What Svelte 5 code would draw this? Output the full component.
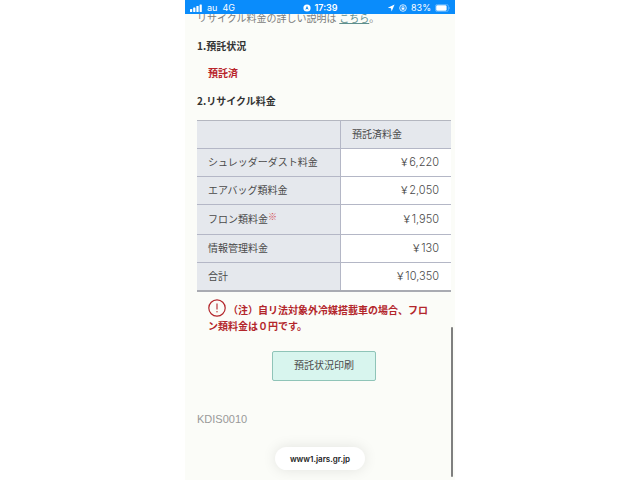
<script lang="ts">
	type Fee = { label: string; amount: number; noted?: boolean };

	const fees: Fee[] = [
		{ label: 'シュレッダーダスト料金', amount: 6220 },
		{ label: 'エアバッグ類料金', amount: 2050 },
		{ label: 'フロン類料金', amount: 1950, noted: true },
		{ label: '情報管理料金', amount: 130 },
	];

	const total = fees.reduce((sum, fee) => sum + fee.amount, 0);

	function formatYen(n: number): string {
		return n.toLocaleString('en-US');
	}
</script>

<div class="phone">
	<header class="status-bar">
		<div class="status-left">
			<svg class="signal" viewBox="0 0 12 8" aria-hidden="true">
				<rect x="0" y="5" width="2.2" height="3" rx="0.5" />
				<rect x="3.2" y="3.6" width="2.2" height="4.4" rx="0.5" />
				<rect x="6.4" y="2" width="2.2" height="6" rx="0.5" />
				<rect x="9.6" y="0.4" width="2.2" height="7.6" rx="0.5" />
			</svg>
			<span>au</span>
			<span>4G</span>
		</div>
		<div class="status-center">
			<svg class="dot" viewBox="0 0 8 8" aria-hidden="true">
				<circle cx="4" cy="4" r="3.6" fill="#fff" />
				<path d="M4 1.8 5.7 5.7 4 4.8 2.3 5.7Z" fill="#0a8cfb" />
			</svg>
			<span>17:39</span>
		</div>
		<div class="status-right">
			<svg class="dot" viewBox="0 0 8 8" aria-hidden="true">
				<path d="M7.6 0.6 4.6 7.4 4 4.3 0.8 3.8Z" fill="#fff" />
			</svg>
			<svg class="dot" viewBox="0 0 8 8" fill="none" stroke="#fff" aria-hidden="true">
				<circle cx="4" cy="4" r="3.3" stroke-width="0.8" />
				<rect x="2.6" y="3.7" width="2.8" height="2" fill="#fff" stroke="none" />
				<path d="M3 3.8V3a1 1 0 0 1 2 0v0.8" stroke-width="0.7" />
			</svg>
			<span>83%</span>
			<svg class="battery" viewBox="0 0 16 8" aria-hidden="true">
				<rect x="0.4" y="0.4" width="13" height="7.2" rx="2" fill="none" stroke="#6fbcff" stroke-width="0.8" />
				<rect x="1.2" y="1.2" width="10.4" height="5.6" rx="1.3" fill="#fff" />
				<path d="M14.5 2.8q1.2 1.2 0 2.4Z" fill="#8ac8ff" />
			</svg>
		</div>
	</header>

	<main>
		<p class="lead">リサイクル料金の詳しい説明は <a href="#detail">こちら</a>。</p>

		<h2>1.預託状況</h2>
		<p class="state">預託済</p>
		<h2>2.リサイクル料金</h2>

		<table>
			<thead>
				<tr>
					<td></td>
					<th scope="col">預託済料金</th>
				</tr>
			</thead>
			<tbody>
				{#each fees as fee}
					<tr class:noted={fee.noted}>
						<th scope="row">{fee.label}{#if fee.noted}<sup>※</sup>{/if}</th>
						<td>&#xFFE5;<span class="num">{formatYen(fee.amount)}</span></td>
					</tr>
				{/each}
				<tr>
					<th scope="row">合計</th>
					<td>&#xFFE5;<span class="num">{formatYen(total)}</span></td>
				</tr>
			</tbody>
		</table>

		<p class="note">
			<svg viewBox="0 0 18 18" fill="none" stroke="#b3262b" aria-hidden="true">
				<circle cx="9" cy="9" r="8.2" stroke-width="1.2" />
				<path d="M9 4.5v6" stroke-width="1.1" />
				<circle cx="9" cy="12.8" r="0.7" fill="#b3262b" stroke="none" />
			</svg>&#xFF08;注&#xFF09;自リ法対象外冷媒搭載車の場合、フロン類料金は&#xFF10;円です。
		</p>

		<button class="print" type="button">預託状況印刷</button>

		<p class="screen-id">KDIS0010</p>
	</main>

	<div class="scrollbar"></div>
	<button class="address" type="button">www1.jars.gr.jp</button>
</div>

<style>
	:global(body) {
		background: #fff;
	}

	.phone {
		position: relative;
		max-width: 270px;
		min-height: 100vh;
		margin: 0 auto;
		background: #fbfcf8;
		color: #4a4a4a;
		font-family: 'Liberation Sans', 'Noto Sans CJK JP', sans-serif;
		font-size: 10px;
		line-height: 16px;
		overflow: hidden;
	}

	.status-bar {
		position: relative;
		z-index: 1;
		display: grid;
		grid-template-columns: 1fr auto 1fr;
		align-items: center;
		height: 14px;
		padding: 0 4px 0 5px;
		background: #0a8cfb;
		color: #fff;
		font-family: Inter, sans-serif;
		font-size: 9px;
	}

	.status-left, .status-center, .status-right {
		display: flex;
		align-items: center;
		gap: 5px;
	}

	.status-center {
		gap: 3px;
		font-weight: 600;
	}

	.status-right {
		justify-content: flex-end;
		gap: 4px;
	}

	.signal {
		width: 12px;
		height: 8px;
		fill: #fff;
	}

	.dot {
		width: 8px;
		height: 8px;
	}

	.battery {
		width: 16px;
		height: 8px;
	}

	main {
		padding: 0 4px 0 12px;
	}

	p, h2 {
		margin: 0;
	}

	.lead {
		margin-top: -3px;
		color: #7c7c7c;
	}

	.lead a {
		color: #5e8f8d;
	}

	h2 {
		margin: 11px 0;
		color: #333;
		font-family: 'Noto Sans CJK JP', sans-serif;
		font-size: 10px;
		line-height: 16px;
		font-weight: 700;
	}

	.state {
		margin: 12px 11px 11px;
		color: #b8232a;
		font-weight: 700;
	}

	table {
		width: 100%;
		border-collapse: collapse;
		border-top: 1px solid #b4b7c0;
		border-bottom: 2px solid #a9abb2;
	}

	th, td {
		height: 27px;
		padding: 0 12px 0 11px;
		border-bottom: 1px solid #b4b7c6;
		font-weight: 400;
		text-align: left;
	}

	.noted > * {
		height: 29px;
	}

	tr > :first-child {
		width: 120px;
		border-right: 1px solid #b4b7c6;
		white-space: nowrap;
	}

	th, thead td {
		background: #e5e8ed;
	}

	tbody td {
		background: #fff;
		text-align: right;
	}

	.num {
		font-family: Inter, sans-serif;
		font-size: 11px;
		font-weight: 300;
	}

	sup {
		color: #d2474c;
		font-size: 9px;
		font-weight: 500;
		line-height: 8px;
		vertical-align: 3px;
	}

	.note {
		padding: 7px 16px 0 11px;
		color: #b3262b;
		font-weight: 700;
	}

	.note svg {
		width: 18px;
		height: 18px;
		margin-right: 2px;
		vertical-align: -3px;
	}

	.print {
		display: block;
		width: 104px;
		height: 30px;
		margin: 16px auto 0;
		padding: 0;
		background: #d8f5ee;
		border: 1px solid #8fc4b8;
		border-radius: 2px;
		color: #4a4a4a;
		font: inherit;
	}

	.screen-id {
		margin-top: 30px;
		color: #999;
		font-size: 11px;
	}

	.scrollbar {
		position: absolute;
		right: 2px;
		bottom: 3px;
		width: 2px;
		height: 150px;
		border-radius: 1px;
		background: #7f7f7f;
	}

	.address {
		position: absolute;
		left: 50%;
		bottom: 10px;
		transform: translateX(-50%);
		width: 90px;
		height: 23px;
		padding: 0;
		border: none;
		border-radius: 12px;
		background: #fff;
		box-shadow: 0 0 14px rgba(0, 0, 0, 0.1);
		color: #222;
		font-family: Inter, sans-serif;
		font-size: 8px;
		font-weight: 600;
		white-space: nowrap;
	}
</style>
